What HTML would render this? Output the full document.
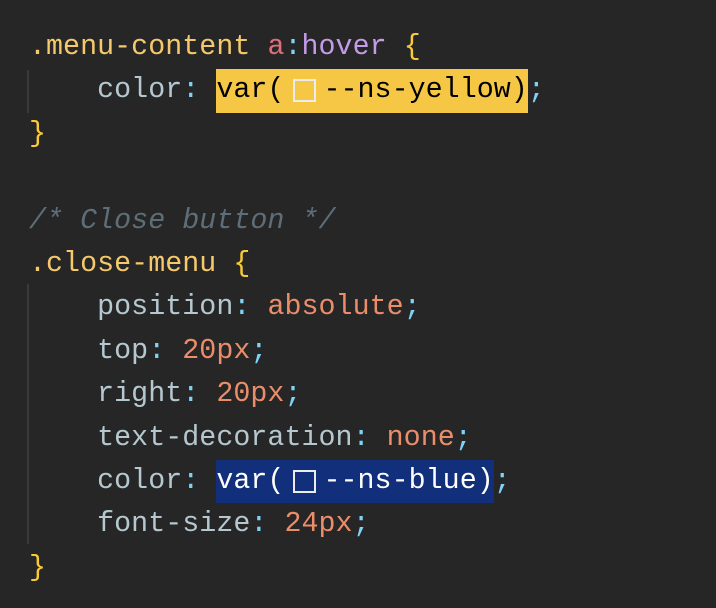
<!DOCTYPE html>
<html><head><style>
body{margin:0;width:716px;height:608px;background:#262626;overflow:hidden;}
.code{position:absolute;left:29px;top:26px;font-family:"Liberation Mono",monospace;font-size:28.3px;letter-spacing:0.05px;line-height:43.4px;color:#b5c8d0;}
.l{height:43.4px;white-space:pre;}
.sel{color:#f5c96b}.tag{color:#de6f78}.ps{color:#c49be8}.br{color:#f8c93b}
.c{color:#7fd3f7}.v{color:#ea8d6a}.cm{color:#5e6e78;font-style:italic}
.hy{background:#f6c744;color:#000;display:inline-block;height:43.4px;vertical-align:top;}
.hb{background:#112f7a;color:#fff;display:inline-block;height:43.4px;vertical-align:top;}
.sw{display:inline-block;width:39px;height:43.4px;position:relative;vertical-align:top;}
.sw i{position:absolute;left:9px;top:10px;width:19px;height:19px;border:2px solid #ececec;}
.g{position:absolute;left:27px;width:2px;background:#3a3a3a;}
</style></head><body>
<div class="g" style="top:70px;height:43px"></div>
<div class="g" style="top:284px;height:260px"></div>
<div class="code"><div class="l"><span class="sel">.menu-content </span><span class="tag">a</span><span class="c">:</span><span class="ps">hover</span> <span class="br">{</span></div><div class="l">    color<span class="c">:</span> <span class="hy">var(<span class="sw"><i></i></span>--ns-yellow)</span><span class="c">;</span></div><div class="l"><span class="br">}</span></div><div class="l"> </div><div class="l"><span class="cm">/* Close button */</span></div><div class="l"><span class="sel">.close-menu</span> <span class="br">{</span></div><div class="l">    position<span class="c">:</span> <span class="v">absolute</span><span class="c">;</span></div><div class="l">    top<span class="c">:</span> <span class="v">20px</span><span class="c">;</span></div><div class="l">    right<span class="c">:</span> <span class="v">20px</span><span class="c">;</span></div><div class="l">    text-decoration<span class="c">:</span> <span class="v">none</span><span class="c">;</span></div><div class="l">    color<span class="c">:</span> <span class="hb">var(<span class="sw"><i></i></span>--ns-blue)</span><span class="c">;</span></div><div class="l">    font-size<span class="c">:</span> <span class="v">24px</span><span class="c">;</span></div><div class="l"><span class="br">}</span></div></div>
</body></html>
